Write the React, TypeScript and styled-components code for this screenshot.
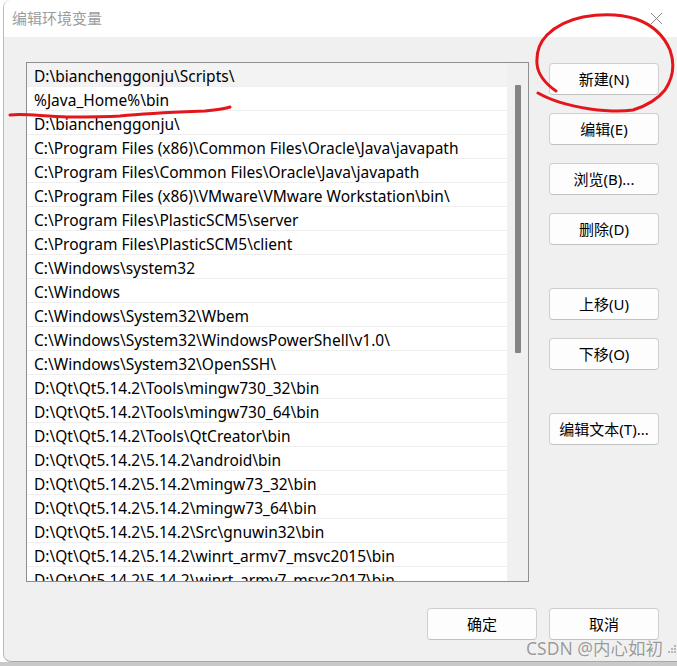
import React from "react";
import styled, { createGlobalStyle } from "styled-components";

const Global = createGlobalStyle`
  html, body { margin: 0; padding: 0; background: #ffffff; }
  body { font-family: "Noto Sans", "Noto Sans CJK SC", sans-serif; }
  #root { width: 677px; height: 666px; overflow: hidden; position: relative; }
`;

const Page = styled.div`
  width: 677px;
  height: 666px;
  display: flex;
  flex-direction: column;
  background: #ffffff;
  position: relative;
`;

const Dialog = styled.div`
  margin-left: 3px;
  width: 674px;
  height: 662px;
  box-sizing: border-box;
  border-left: 1px solid #b9b9b9;
  border-bottom: 1px solid #a9a9a9;
  border-radius: 8px 0 0 8px;
  background: #f0f0f0;
  display: flex;
  flex-direction: column;
  overflow: hidden;
  position: relative;
`;

const BottomShade = styled.div`
  flex: 1;
  background: #c9c9c9;
`;

const TitleBar = styled.div`
  height: 37px;
  background: #ffffff;
  display: flex;
  align-items: center;
  justify-content: space-between;
  padding: 0 14px 0 8px;
  flex-shrink: 0;
`;

const Title = styled.div`
  font-family: "Noto Sans CJK SC", sans-serif;
  font-size: 15px;
  color: #9c9c9c;
  margin-top: -2px;
`;

const Body = styled.div`
  display: flex;
  gap: 20px;
  padding: 25px 18px 0 22px;
`;

const ListBox = styled.div`
  width: 504px;
  height: 520px;
  box-sizing: border-box;
  border: 1px solid #8f8f8f;
  background: #ffffff;
  display: flex;
  overflow: hidden;
`;

const Rows = styled.div`
  width: 480px;
  display: flex;
  flex-direction: column;
`;

const Row = styled.div<{ $selected?: boolean }>`
  height: 24px;
  flex-shrink: 0;
  box-sizing: border-box;
  border-bottom: 1px solid #efefef;
  background: ${(p) => (p.$selected ? "#f3f3f3" : "#ffffff")};
  padding: 2px 0 0 7px;
  display: flex;
  align-items: center;
  font-family: "Noto Sans", sans-serif;
  font-size: 15.5px;
  color: #000000;
  white-space: nowrap;
`;

const Track = styled.div`
  width: 21px;
  background: #f0f0f0;
  padding: 22px 0 0 8px;
  box-sizing: border-box;
`;

const Thumb = styled.div`
  width: 6px;
  height: 268px;
  background: #858585;
  border-radius: 1px;
`;

const Side = styled.div`
  display: flex;
  flex-direction: column;
  gap: 18px;
  padding-top: 1px;
`;

const Button = styled.button<{ $gapBefore?: number }>`
  width: 110px;
  height: 32px;
  margin-top: ${(p) => p.$gapBefore ?? 0}px;
  box-sizing: border-box;
  border: 1px solid #cfcfcf;
  border-bottom-color: #c2c2c2;
  border-radius: 4px;
  background: #fdfdfd;
  font-family: "Noto Sans", "Noto Sans CJK SC", sans-serif;
  font-size: 15px;
  color: #000000;
  padding: 0 0 2px 0;
  display: flex;
  align-items: center;
  justify-content: center;
`;

const Footer = styled.div`
  display: flex;
  justify-content: flex-end;
  gap: 12px;
  padding: 26px 18px 0 0;
`;

const CloseIcon = styled.svg`
  width: 13px;
  height: 13px;
  margin-top: -1px;
`;

const Overlay = styled.svg`
  position: absolute;
  left: 0;
  top: 0;
  width: 677px;
  height: 666px;
  pointer-events: none;
`;

const Watermark = styled.div`
  position: absolute;
  left: 526px;
  top: 635px;
  font-family: "Noto Sans", "Noto Sans CJK SC", sans-serif;
  font-size: 17.5px;
  color: rgba(115, 115, 115, 0.72);
  text-shadow: 0 0 1px rgba(255, 255, 255, 0.9);
  white-space: nowrap;
  pointer-events: none;
`;

const Grip = styled.svg`
  position: absolute;
  right: 0;
  bottom: 5px;
  width: 12px;
  height: 12px;
`;

const paths = [
  "D:\\bianchenggonju\\Scripts\\",
  "%Java_Home%\\bin",
  "D:\\bianchenggonju\\",
  "C:\\Program Files (x86)\\Common Files\\Oracle\\Java\\javapath",
  "C:\\Program Files\\Common Files\\Oracle\\Java\\javapath",
  "C:\\Program Files (x86)\\VMware\\VMware Workstation\\bin\\",
  "C:\\Program Files\\PlasticSCM5\\server",
  "C:\\Program Files\\PlasticSCM5\\client",
  "C:\\Windows\\system32",
  "C:\\Windows",
  "C:\\Windows\\System32\\Wbem",
  "C:\\Windows\\System32\\WindowsPowerShell\\v1.0\\",
  "C:\\Windows\\System32\\OpenSSH\\",
  "D:\\Qt\\Qt5.14.2\\Tools\\mingw730_32\\bin",
  "D:\\Qt\\Qt5.14.2\\Tools\\mingw730_64\\bin",
  "D:\\Qt\\Qt5.14.2\\Tools\\QtCreator\\bin",
  "D:\\Qt\\Qt5.14.2\\5.14.2\\android\\bin",
  "D:\\Qt\\Qt5.14.2\\5.14.2\\mingw73_32\\bin",
  "D:\\Qt\\Qt5.14.2\\5.14.2\\mingw73_64\\bin",
  "D:\\Qt\\Qt5.14.2\\5.14.2\\Src\\gnuwin32\\bin",
  "D:\\Qt\\Qt5.14.2\\5.14.2\\winrt_armv7_msvc2015\\bin",
  "D:\\Qt\\Qt5.14.2\\5.14.2\\winrt_armv7_msvc2017\\bin",
];

const sideButtons: { label: string; gap?: number }[] = [
  { label: "新建(N)" },
  { label: "编辑(E)" },
  { label: "浏览(B)..." },
  { label: "删除(D)" },
  { label: "上移(U)", gap: 25 },
  { label: "下移(O)" },
  { label: "编辑文本(T)...", gap: 25 },
];

export default function App() {
  return (
    <>
      <Global />
      <Page>
        <Dialog>
          <TitleBar>
            <Title>编辑环境变量</Title>
            <CloseIcon viewBox="0 0 13 13">
              <path d="M1 1 L12 12 M12 1 L1 12" stroke="#8a8a8a" strokeWidth="1" fill="none" />
            </CloseIcon>
          </TitleBar>
          <Body>
            <ListBox>
              <Rows>
                {paths.map((p, i) => (
                  <Row key={i} $selected={i === 0}>
                    {p}
                  </Row>
                ))}
              </Rows>
              <Track>
                <Thumb />
              </Track>
            </ListBox>
            <Side>
              {sideButtons.map((b) => (
                <Button key={b.label} $gapBefore={b.gap}>
                  {b.label}
                </Button>
              ))}
            </Side>
          </Body>
          <Footer>
            <Button>确定</Button>
            <Button>取消</Button>
          </Footer>
          <Grip viewBox="0 0 12 12">
            {[
              [9, 1],
              [6, 4],
              [9, 4],
              [3, 7],
              [6, 7],
              [9, 7],
            ].map(([x, y], i) => (
              <rect key={i} x={x} y={y} width="2" height="2" fill="#b5b5b5" />
            ))}
          </Grip>
        </Dialog>
        <BottomShade />
        <Overlay viewBox="0 0 677 666">
          <path
            d="M556,91 C546,84 538,76 537,64 C536,50 540,42 547,35 C556,26 568,20 583,17 C600,14 620,14 636,19 C653,25 664,36 670,50 C675,64 673,78 665,90 C657,100 646,106 633,110 C620,112 605,111 590,109 C570,106 552,101 538,93"
            stroke="#e3161b"
            strokeWidth="3"
            fill="none"
            strokeLinecap="round"
          />
          <path
            d="M10,115 C25,113 45,117 67,117 C90,117 105,117 120,116 C150,113 180,112 205,111 C215,110 225,109 230,107"
            stroke="#e3161b"
            strokeWidth="3"
            fill="none"
            strokeLinecap="round"
          />
        </Overlay>
        <Watermark>CSDN @内心如初</Watermark>
      </Page>
    </>
  );
}
